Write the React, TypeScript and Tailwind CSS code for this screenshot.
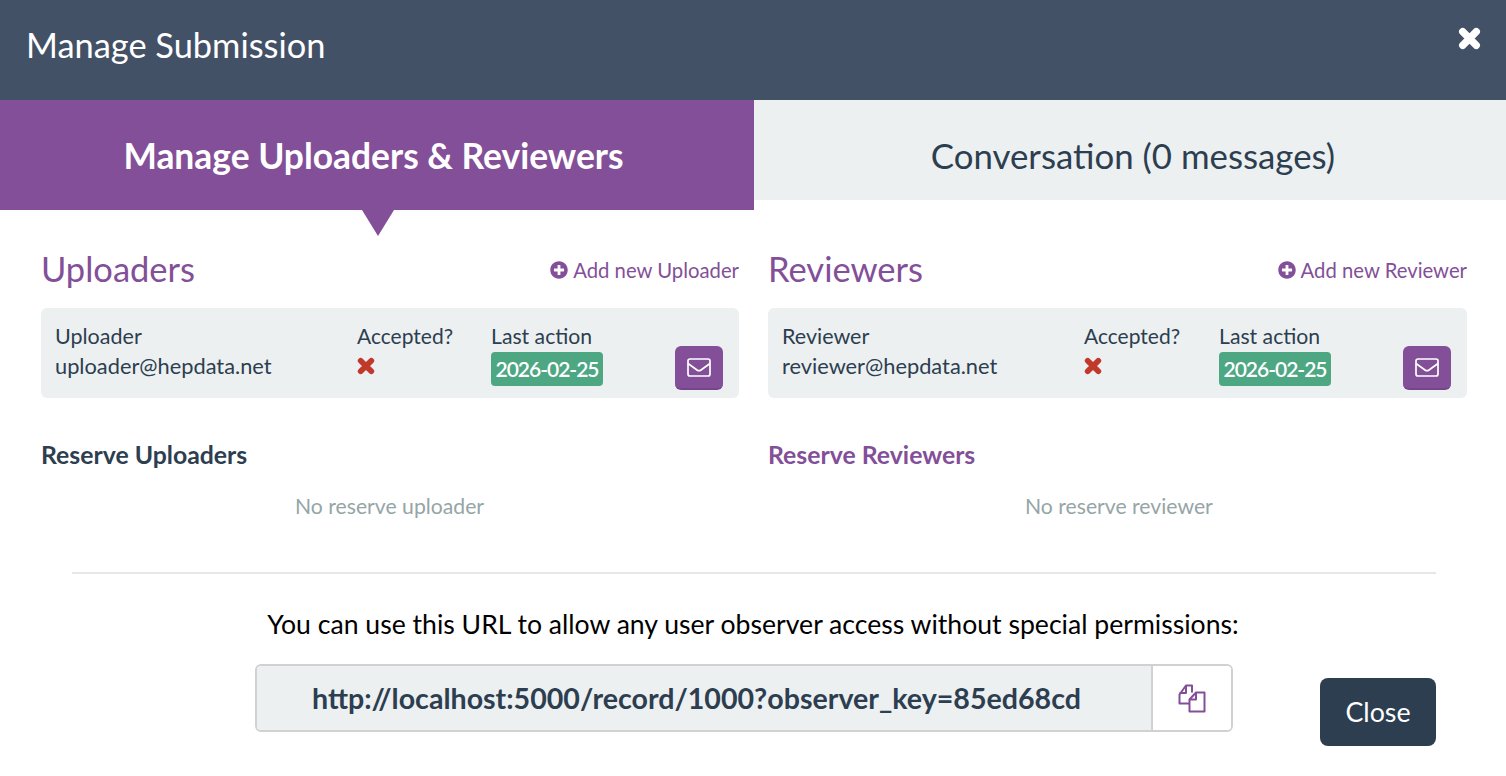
import React from "react";
import { FaPlusCircle } from "react-icons/fa";

function Cross({ size, color }: { size: number; color: string }) {
  return (
    <svg width={size} height={size} viewBox="0 0 22 22" fill="none" stroke={color} strokeWidth="7" strokeLinecap="round">
      <path d="M4.5 4.5L17.5 17.5M17.5 4.5L4.5 17.5" />
    </svg>
  );
}

function Envelope() {
  return (
    <svg width="24" height="19" viewBox="0 0 24 19" fill="none" stroke="#fff" strokeWidth="1.7" strokeLinejoin="round">
      <rect x="1" y="1" width="22" height="17" rx="2" />
      <path d="M1 5.5L10 12Q12 13.4 14 12L23 5.5" />
    </svg>
  );
}

function CopyIcon() {
  return (
    <svg width="28" height="29" viewBox="0 0 28 29" fill="none" stroke="#834f98" strokeWidth="2" strokeLinejoin="round">
      <path d="M11 19.5H1.5V10.5L8 1.5H14V8.5" />
      <path d="M8 1.5V9H1.5" />
      <path d="M11.5 27.5V15.5L18 8.5H26.5V27.5Z" />
      <path d="M18 8.5V15.5H11.5" />
    </svg>
  );
}

function Person({ role, email, midW }: { role: string; email: string; midW: string }) {
  return (
    <div className="flex h-[90px] rounded-md bg-[#ecf0f1] pl-[14px] pr-4 text-[21.5px] leading-[30px] text-[#2c3e50]">
      <div className="w-[302px] pt-[13px]">
        <div>{role}</div>
        <div className="text-[21.8px]">{email}</div>
      </div>
      <div className={`${midW} pt-[13px]`}>
        <div className="text-[21px]">Accepted?</div>
        <div className="flex h-[30px] items-center">
          <Cross size={18} color="#c0392b" />
        </div>
      </div>
      <div className="w-[184px] pt-[13px]">
        <div className="text-[21.2px]">Last action</div>
        <div className="mt-[1px] w-[112px] rounded-[4px] bg-[#4ea783] text-center text-[21px] font-semibold leading-[34px] tracking-[-1px] text-white">2026-02-25</div>
      </div>
      <div className="pt-[38px]">
        <button className="flex h-[44px] w-[48px] items-center justify-center rounded-md border-b-2 border-[#76468a] bg-[#834f98]">
          <Envelope />
        </button>
      </div>
    </div>
  );
}

function Column({ title, add, role, email, reserve, reserveClass, none, w, noneClass, midW }: { title: string; add: string; role: string; email: string; reserve: string; reserveClass: string; none: string; w: string; noneClass: string; midW: string }) {
  return (
    <div className={w}>
      <div className="flex h-[98px] items-end justify-between pb-[17px]">
        <h2 className="text-[34.5px] leading-[44px] font-normal text-[#834f98]">{title}</h2>
        <div className="mb-[8px] flex items-center gap-[5px] text-[20.3px] leading-[26px] text-[#834f98]">
          <FaPlusCircle size={18} />
          <span>{add}</span>
        </div>
      </div>
      <Person role={role} email={email} midW={midW} />
      <div className={`mt-[41px] text-[24.8px] font-bold leading-[32px] ${reserveClass}`}>{reserve}</div>
      <div className={`mt-[21px] text-[21.2px] leading-[28px] text-[#95a5a6] ${noneClass}`}>{none}</div>
    </div>
  );
}

export default function App() {
  return (
    <div className="h-[776px] w-[1506px] overflow-hidden bg-white font-['Lato','Noto_Sans',sans-serif]">
      <header className="flex h-[100px] justify-between bg-[#435167] pl-[26px] pr-[25px] text-white">
        <h1 className="pt-[23px] text-[34.4px] leading-[44px] font-normal">Manage Submission</h1>
        <div className="pt-[27px]"><Cross size={23} color="#fff" /></div>
      </header>

      <div className="relative flex h-[110px] items-start">
        <div className="flex h-[110px] w-[754px] items-center justify-center bg-[#834f98] pr-[7px] pt-[2px] text-[35.4px] font-bold text-white">
          Manage Uploaders &amp; Reviewers
        </div>
        <div className="flex h-[100px] flex-1 items-center justify-center bg-[#ecf0f1] pl-[6px] pt-[12px] text-[34.8px] text-[#2c3e50]">
          Conversation (0 messages)
        </div>
        <svg className="absolute left-[362px] top-[110px]" width="32" height="26" viewBox="0 0 32 26">
          <path d="M0 0H32L16 26Z" fill="#834f98" />
        </svg>
      </div>

      <div className="flex gap-[29px] pl-[41px]">
        <Column w="w-[698px]" midW="w-[134px]" title="Uploaders" add="Add new Uploader" role="Uploader" email="uploader@hepdata.net" reserve="Reserve Uploaders" reserveClass="text-[#2c3e50]" none="No reserve uploader" noneClass="pl-[254px]" />
        <Column w="w-[699px]" midW="w-[135px]" title="Reviewers" add="Add new Reviewer" role="Reviewer" email="reviewer@hepdata.net" reserve="Reserve Reviewers" reserveClass="text-[#834f98]" none="No reserve reviewer" noneClass="pl-[257px]" />
      </div>

      <div className="ml-[72px] mt-[52px] h-[2px] w-[1364px] bg-[#e5e8e8]" />

      <p className="mt-[32px] text-center text-[26.6px] leading-[36px] text-black">
        You can use this URL to allow any user observer access without special permissions:
      </p>

      <div className="mt-[5px] flex items-start pl-[255px]">
        <div className="mt-[17px] flex h-[68px] w-[978px] overflow-hidden rounded-md border-2 border-[#cfd1d2]">
          <div className="flex flex-1 items-center justify-center border-r-2 border-[#cfd1d2] bg-[#ecf0f1] pr-[15px] text-[28.6px] font-bold text-[#2c3e50]">
            http://localhost:5000/record/1000?observer_key=85ed68cd
          </div>
          <div className="flex w-[78px] items-center justify-center bg-white">
            <CopyIcon />
          </div>
        </div>
        <button className="ml-[87px] mt-[31px] h-[68px] w-[116px] rounded-lg bg-[#2c3e50] text-[26.8px] text-white">Close</button>
      </div>
    </div>
  );
}
